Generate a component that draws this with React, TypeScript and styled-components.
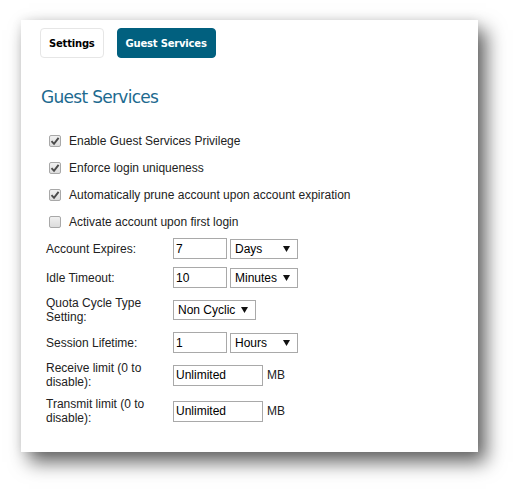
import React, { useState } from 'react';
import styled, { createGlobalStyle } from 'styled-components';

const GlobalStyle = createGlobalStyle`
  html, body {
    margin: 0;
    padding: 0;
    background: #fff;
  }
  body {
    font-family: 'Liberation Sans', Arial, sans-serif;
    font-size: 12px;
    color: #222;
  }
`;

interface CheckOption {
  label: string;
  checked: boolean;
}

const checkOptions: CheckOption[] = [
  { label: 'Enable Guest Services Privilege', checked: true },
  { label: 'Enforce login uniqueness', checked: true },
  { label: 'Automatically prune account upon account expiration', checked: true },
  { label: 'Activate account upon first login', checked: false },
];

const Arrow = () => (
  <svg width="7" height="6" viewBox="0 0 7 6">
    <path d="M0 0 L7 0 L3.5 6 Z" fill="#111" />
  </svg>
);

const Check = () => (
  <svg width="10" height="10" viewBox="0 0 10 10">
    <path d="M1.5 5.2 L4 7.8 L8.6 1.8" stroke="#4a4a4a" strokeWidth="1.9" fill="none" />
  </svg>
);

export default (): JSX.Element => {
  const [checks, setChecks] = useState<boolean[]>(checkOptions.map(c => c.checked));

  const toggle = (i: number) =>
    setChecks(prev => prev.map((v, idx) => (idx === i ? !v : v)));

  return (
    <Page>
      <GlobalStyle />
      <Card>
        <Tabs>
          <Tab>Settings</Tab>
          <Tab active>Guest Services</Tab>
        </Tabs>
        <Heading>Guest Services</Heading>
        <CheckList>
          {checkOptions.map((opt, i) => (
            <CheckRow key={opt.label} onClick={() => toggle(i)}>
              <Box>{checks[i] && <Check />}</Box>
              {opt.label}
            </CheckRow>
          ))}
        </CheckList>
        <Form>
          <FormRow>
            <Label>Account Expires:</Label>
            <Field>
              <TextInput defaultValue="7" />
              <Select width={68}>
                Days <Arrow />
              </Select>
            </Field>
          </FormRow>
          <FormRow>
            <Label>Idle Timeout:</Label>
            <Field>
              <TextInput defaultValue="10" />
              <Select width={68}>
                Minutes <Arrow />
              </Select>
            </Field>
          </FormRow>
          <FormRow tall>
            <Label>Quota Cycle Type Setting:</Label>
            <Field>
              <Select width={83}>
                Non Cyclic <Arrow />
              </Select>
            </Field>
          </FormRow>
          <FormRow>
            <Label>Session Lifetime:</Label>
            <Field>
              <TextInput defaultValue="1" />
              <Select width={68}>
                Hours <Arrow />
              </Select>
            </Field>
          </FormRow>
          <FormRow tall>
            <Label>Receive limit (0 to disable):</Label>
            <Field>
              <TextInput wide defaultValue="Unlimited" />
              <Unit>MB</Unit>
            </Field>
          </FormRow>
          <FormRow tall>
            <Label>Transmit limit (0 to disable):</Label>
            <Field>
              <TextInput wide defaultValue="Unlimited" />
              <Unit>MB</Unit>
            </Field>
          </FormRow>
        </Form>
      </Card>
    </Page>
  );
};

const Page = styled.div`
  box-sizing: border-box;
  min-height: 495px;
  padding: 20px 0 43px 21px;
  background: #fff;
`;

const Card = styled.div`
  box-sizing: border-box;
  width: 457px;
  height: 432px;
  background: #fff;
  padding: 8px 19px;
  box-shadow: 8px 10px 18px rgba(0, 0, 0, 0.62), 0 0 10px rgba(0, 0, 0, 0.08);
`;

const Tabs = styled.div`
  display: flex;
  gap: 13px;
`;

const Tab = styled.button<{ active?: boolean }>`
  box-sizing: border-box;
  height: 30px;
  padding: 0 8px;
  border-radius: 4px;
  border: 1px solid ${p => (p.active ? '#01607f' : '#e6e6e6')};
  background: ${p => (p.active ? '#01607f' : '#fff')};
  color: ${p => (p.active ? '#fff' : '#000')};
  font-family: 'DejaVu Sans', Verdana, sans-serif;
  font-weight: bold;
  font-size: 10px;
  letter-spacing: -0.2px;
  cursor: pointer;
`;

const Heading = styled.h2`
  margin: 28px 0 0 1px;
  font-family: 'DejaVu Sans', Verdana, sans-serif;
  font-weight: normal;
  font-size: 17px;
  letter-spacing: -0.7px;
  line-height: 22px;
  color: #1d6a8f;
`;

const CheckList = styled.div`
  display: flex;
  flex-direction: column;
  margin-top: 19px;
  padding-left: 9px;
`;

const CheckRow = styled.label`
  display: flex;
  align-items: center;
  height: 27px;
  gap: 8px;
  cursor: pointer;
`;

const Box = styled.span`
  box-sizing: border-box;
  width: 12px;
  height: 12px;
  border: 1px solid #a8a8a8;
  border-radius: 2px;
  background: linear-gradient(#f0f0f0, #dcdcdc);
  display: flex;
  align-items: center;
  justify-content: center;
`;

const Form = styled.div`
  display: flex;
  flex-direction: column;
  margin-top: -1px;
  padding-left: 6px;
`;

const FormRow = styled.div<{ tall?: boolean }>`
  display: grid;
  grid-template-columns: 127px 1fr;
  align-items: center;
  height: ${p => (p.tall ? 36 : 29)}px;
`;

const Label = styled.div`
  width: 105px;
  line-height: 14px;
`;

const Field = styled.div`
  display: flex;
  align-items: center;
  gap: 3px;
`;

const TextInput = styled.input<{ wide?: boolean }>`
  box-sizing: border-box;
  width: ${p => (p.wide ? 90 : 54)}px;
  height: 21px;
  border: 1px solid #a9a9a9;
  padding: 0 2px;
  font-family: 'Liberation Sans', Arial, sans-serif;
  font-size: 12px;
  color: #000;
  outline: none;
`;

const Select = styled.div<{ width: number }>`
  box-sizing: border-box;
  width: ${p => p.width}px;
  height: 20px;
  border: 1px solid #a9a9a9;
  padding: 0 7px 0 4px;
  display: flex;
  align-items: center;
  justify-content: space-between;
  font-size: 12px;
  color: #000;
  background: #fff;
`;

const Unit = styled.span`
  margin-left: 1px;
  color: #222;
`;
